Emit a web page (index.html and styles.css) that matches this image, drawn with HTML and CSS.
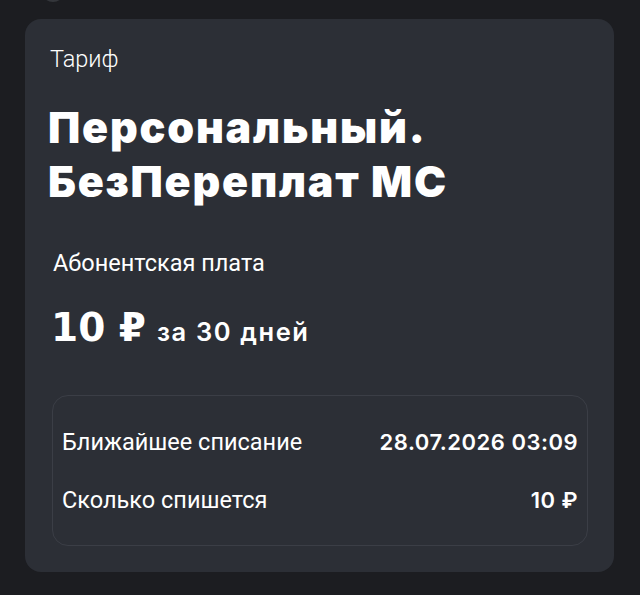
FILE: index.html
```html
<!DOCTYPE html>
<html lang="ru">
<head>
  <meta charset="UTF-8">
  <title>Тариф</title>
  <link rel="stylesheet" href="styles.css">
</head>
<body>
  <div class="peek"></div>

  <!-- Tariff card -->
  <div class="card">
    <div class="label">Тариф</div>
    <h1 class="title">Персональный.<br>БезПереплат МС</h1>

    <div class="fee-label">Абонентская плата</div>
    <div class="fee">
      <span class="fee-sum">10 ₽</span>
      <span class="fee-period">за 30 дней</span>
    </div>

    <div class="charges">
      <div class="row">
        <span class="row-name">Ближайшее списание</span>
        <span class="row-value">28.07.2026 03:09</span>
      </div>
      <div class="row">
        <span class="row-name">Сколько спишется</span>
        <span class="row-value">10 ₽</span>
      </div>
    </div>
  </div>
</body>
</html>
```

FILE: styles.css
```css
body {
  margin: 0;
  background: #1c1d21;
  color: #fff;
  font-family: Roboto, "Noto Sans", sans-serif;
  height: 595px;
  overflow: hidden;
  position: relative;
}
.peek {
  position: absolute;
  left: 41px;
  top: -22px;
  width: 24px;
  height: 24px;
  border-radius: 50%;
  background: #34363b;
}
.card {
  box-sizing: border-box;
  margin: 19px 26px 0 25px;
  background: #2c2f36;
  border-radius: 16px;
  padding: 26px 26px 26px 25px;
  height: 553px;
}
.label {
  font-size: 23.5px;
  font-weight: 300;
  line-height: 28px;
}
.title {
  margin: 27px 0 0 -2px;
  font-family: Inter, sans-serif;
  font-weight: 900;
  font-size: 43px;
  line-height: 54px;
  letter-spacing: 1.8px;
}
.fee-label {
  margin-top: 41px;
  padding-left: 3px;
  font-size: 23.5px;
  line-height: 28px;
}
.fee {
  margin-top: 31px;
  padding-left: 1px;
  display: flex;
  align-items: baseline;
  gap: 11px;
  line-height: 40px;
}
.fee-sum {
  font-family: "DejaVu Sans", sans-serif;
  font-weight: 700;
  font-size: 39px;
}
.fee-period {
  font-family: Inter, sans-serif;
  font-weight: 600;
  font-size: 25.5px;
  letter-spacing: 1.6px;
}
.charges {
  margin: 43px 0 0 2px;
  border: 1px solid #3b3e46;
  border-radius: 16px;
  padding: 32px 9px 31px 9px;
}
.row {
  display: flex;
  justify-content: space-between;
  align-items: baseline;
  font-size: 23.5px;
  line-height: 28px;
}
.row + .row {
  margin-top: 30px;
}
.row-value {
  font-family: Inter, sans-serif;
  font-weight: 600;
  font-size: 22px;
  letter-spacing: 0.5px;
}
```
